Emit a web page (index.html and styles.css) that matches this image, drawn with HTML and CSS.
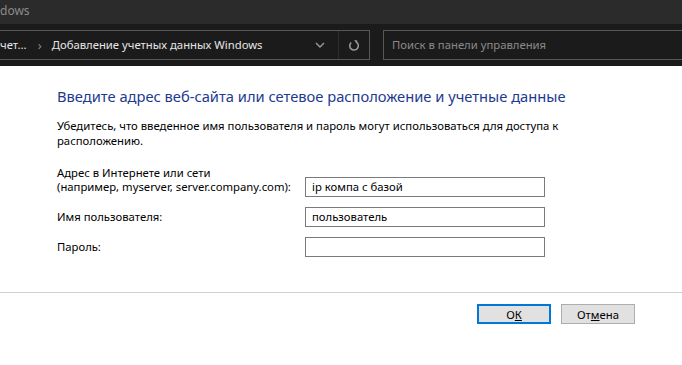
FILE: index.html
```html
<!DOCTYPE html>
<html lang="ru">
<head>
    <meta charset="UTF-8">
    <title>Добавление учетных данных Windows</title>
    <link rel="stylesheet" href="styles.css">
</head>
<body>
    <div class="titlebar">dows</div>
    <div class="navbar">
        <div class="address">
            <div class="crumbs">
                <span>чет...</span>
                <span class="sep">&#8250;</span>
                <span class="current">Добавление учетных данных Windows</span>
            </div>
            <div class="drop">
                <svg width="10" height="6" viewBox="0 0 10 6"><path d="M1 1 L5 5 L9 1" fill="none" stroke="#9a9a9a" stroke-width="1.4"/></svg>
            </div>
            <div class="refresh">
                <svg width="12" height="13" viewBox="0 0 12 13"><path d="M8.5 3.2 A4.3 4.3 0 1 1 3.2 3.5" fill="none" stroke="#9a9a9a" stroke-width="1.6"/><path d="M6.2 1 L9.4 1.6 L8.4 4.6 Z" fill="#9a9a9a"/></svg>
            </div>
        </div>
        <div class="search">Поиск в панели управления</div>
    </div>

    <div class="content">
        <h2 class="heading">Введите адрес веб-сайта или сетевое расположение и учетные данные</h2>
        <p class="note">Убедитесь, что введенное имя пользователя и пароль могут использоваться для доступа к расположению.</p>

        <div class="form">
            <label class="label">Адрес в Интернете или сети<br>(например, myserver, server.company.com):</label>
            <div class="field">ip компа с базой</div>
            <label class="label">Имя пользователя:</label>
            <div class="field">пользователь</div>
            <label class="label">Пароль:</label>
            <div class="field"></div>
        </div>
    </div>

    <div class="footer">
        <button class="btn default">О<u>К</u></button>
        <button class="btn">От<u>м</u>ена</button>
    </div>
</body>
</html>
```

FILE: styles.css
```css
body {
    margin: 0;
    width: 682px;
    height: 365px;
    overflow: hidden;
    background-color: #fff;
    font-family: "Segoe UI", "Noto Sans", sans-serif;
    font-size: 11.3px;
    color: #000;
}
.titlebar {
    height: 24px;
    line-height: 22px;
    background-color: #2b2b2b;
    color: #8c8c8c;
    font-size: 12px;
}
.navbar {
    height: 42px;
    box-sizing: border-box;
    padding-top: 6px;
    background-color: #1b1b1b;
    display: flex;
}
.address {
    width: 371px;
    height: 30px;
    margin-left: -1px;
    box-sizing: border-box;
    border: 1px solid #575757;
    display: flex;
    align-items: stretch;
}
.crumbs {
    flex: 1;
    display: flex;
    align-items: center;
    color: #e6e6e6;
    white-space: nowrap;
    overflow: hidden;
    padding-bottom: 1px;
}
.crumbs .sep {
    color: #8a8a8a;
    margin: 0 10px 0 11px;
    font-size: 13px;
}
.drop {
    width: 36px;
    display: flex;
    align-items: center;
    justify-content: center;
}
.refresh {
    width: 30px;
    border-left: 1px solid #2e2e2e;
    display: flex;
    align-items: center;
    justify-content: center;
}
.search {
    flex: 1;
    margin-left: 13px;
    margin-right: -2px;
    height: 30px;
    box-sizing: border-box;
    border: 1px solid #575757;
    color: #8a8a8a;
    padding-left: 8px;
    line-height: 27px;
}
.content {
    padding: 20px 0 0 57px;
}
.heading {
    margin: 0;
    font-size: 14.7px;
    font-weight: normal;
    color: #1e3a8f;
    line-height: 20px;
}
.note {
    margin: 12px 0 0;
    width: 520px;
    line-height: 15px;
}
.form {
    margin-top: 18px;
    display: grid;
    grid-template-columns: 248px 240px;
    row-gap: 10px;
    align-items: end;
}
.label {
    line-height: 14px;
    padding-bottom: 3px;
}
.field {
    height: 20px;
    box-sizing: border-box;
    border: 1px solid #7a7a7a;
    padding-left: 6px;
    line-height: 18px;
}
.footer {
    margin-top: 35px;
    border-top: 1px solid #d0d0d0;
    display: flex;
    justify-content: flex-end;
    gap: 10px;
    padding: 11px 47px 0 0;
}
.btn {
    width: 74px;
    height: 20px;
    padding: 0;
    box-sizing: border-box;
    font-family: inherit;
    font-size: 11.3px;
    color: #000;
    background-color: #e1e1e1;
    border: 1px solid #adadad;
}
.btn.default {
    border: 2px solid #0078d7;
}
```
